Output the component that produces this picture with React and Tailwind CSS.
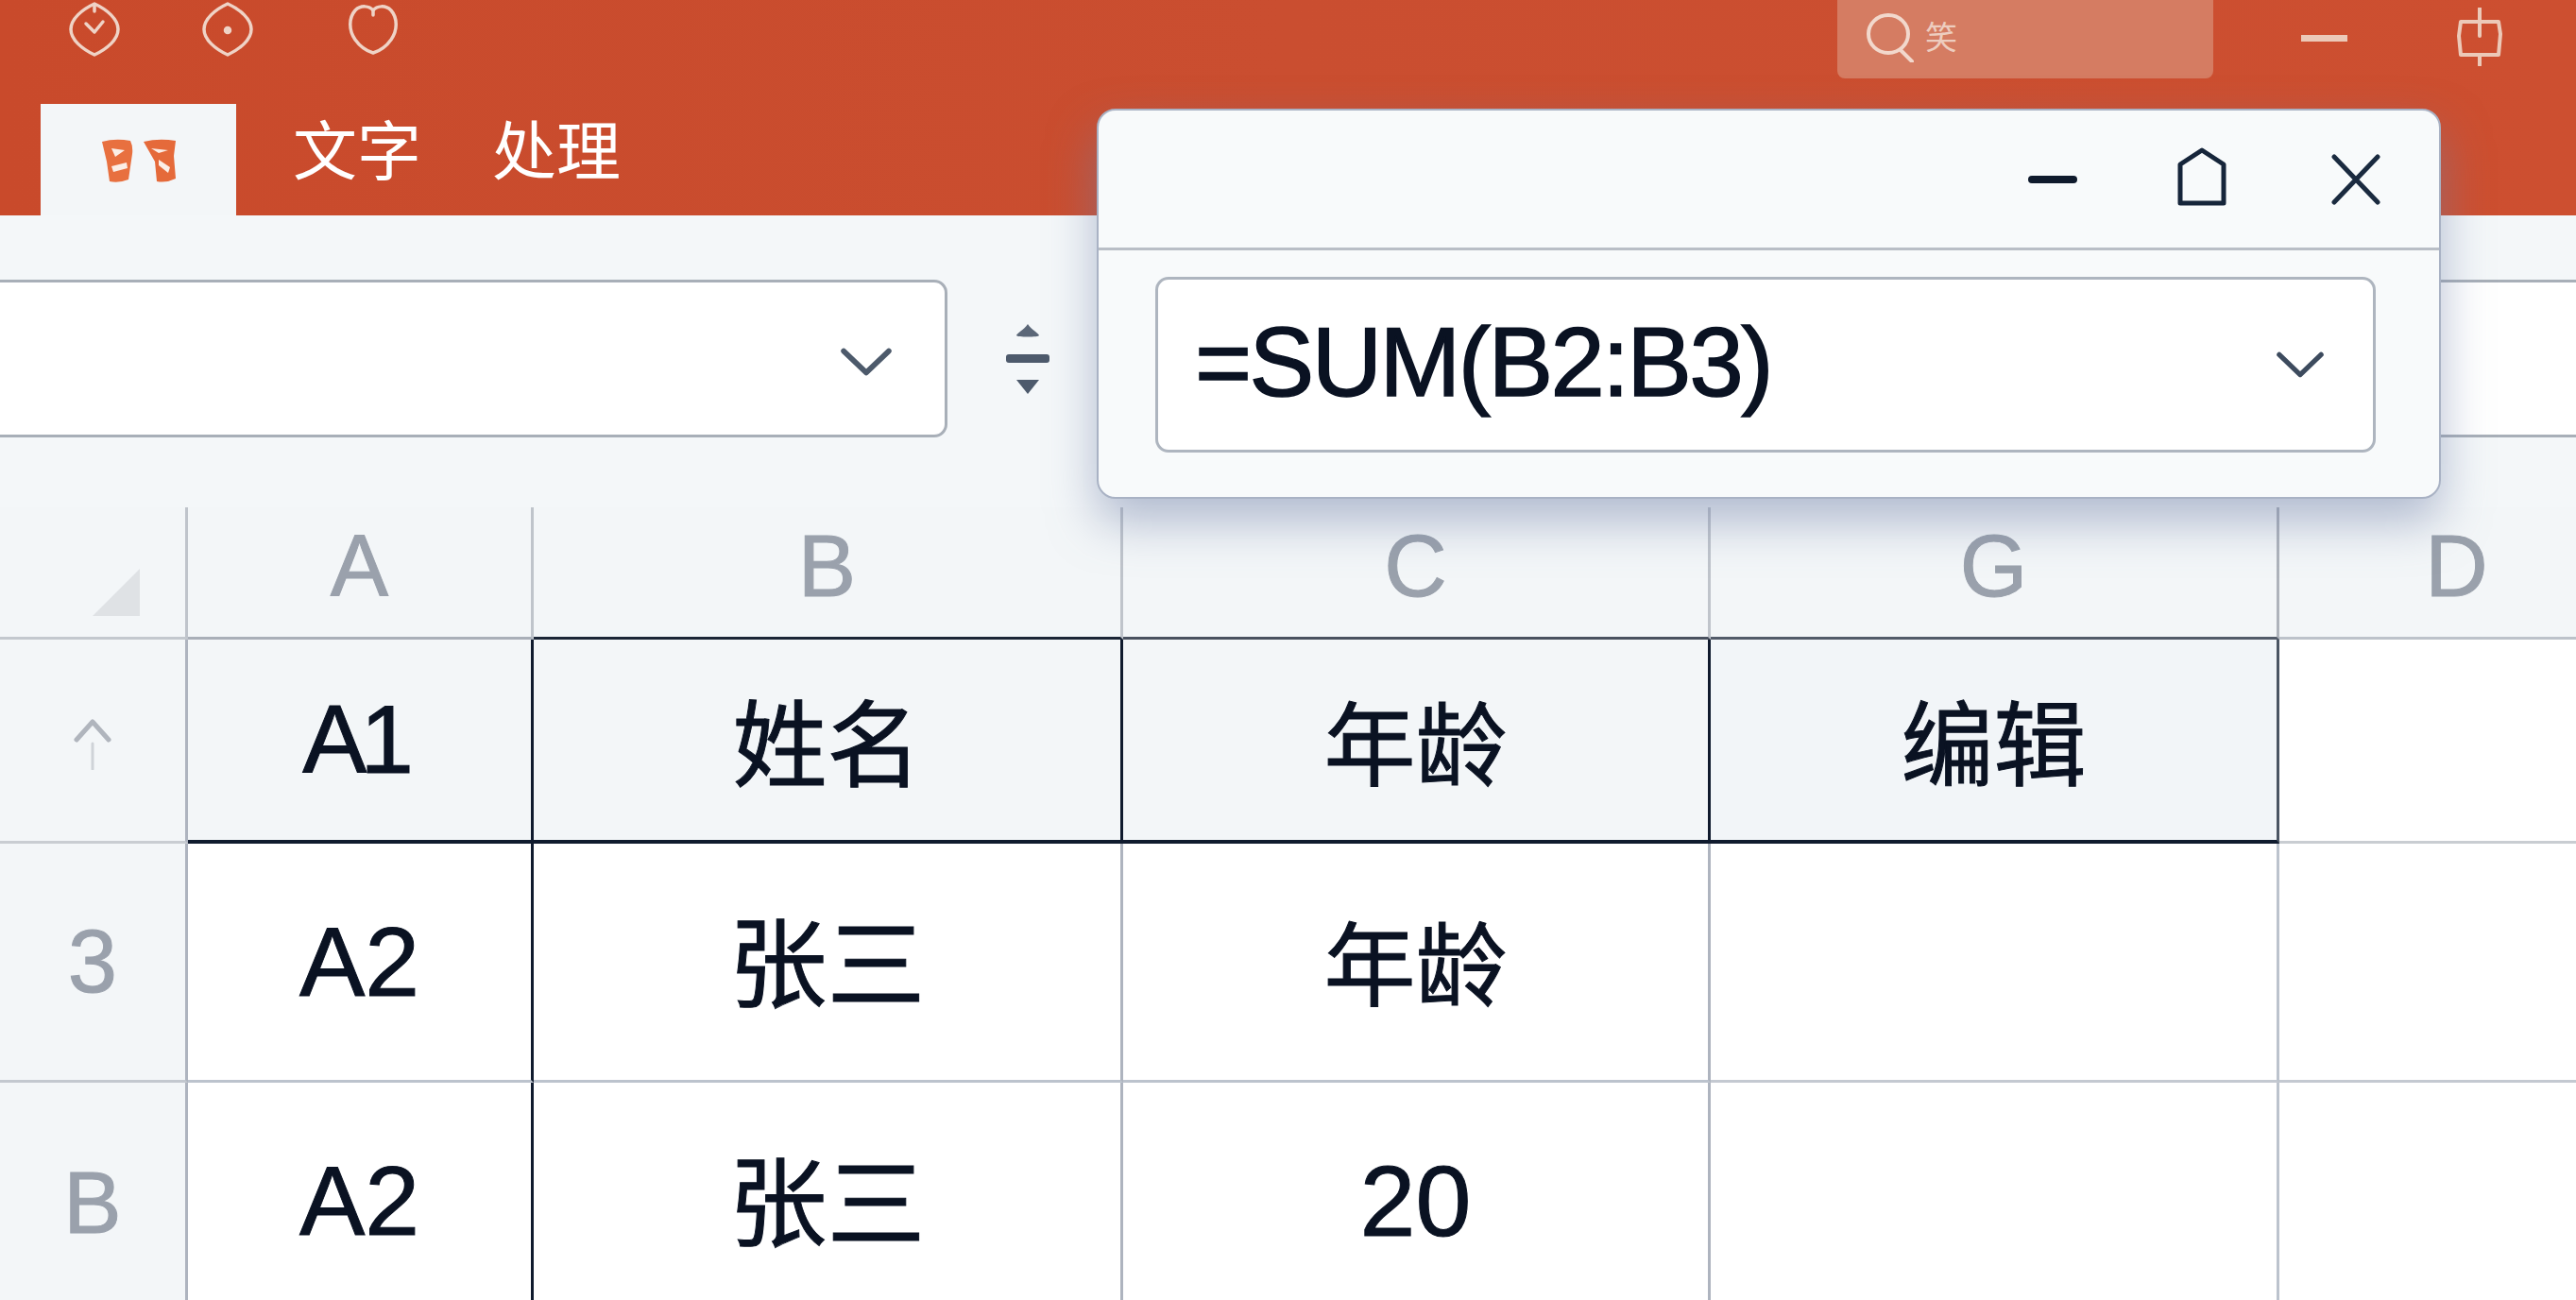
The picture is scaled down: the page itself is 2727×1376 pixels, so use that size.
const strokeLight = "#efd3c6";

// lens shaped icons of the title bar
const LensIcon = ({ children }) => (
  <svg width="54" height="58" viewBox="0 0 54 58" fill="none" stroke={strokeLight} strokeWidth="3.5" strokeLinecap="round" strokeLinejoin="round">
    <path d="M27 2C40 8 52 18 52 29C52 40 40 50 27 56C14 50 2 40 2 29C2 18 14 8 27 2Z" />
    {children}
  </svg>
);

const Chevron = ({ width, height, color }) => (
  <svg width={width} height={height} viewBox="0 0 52 28" fill="none" stroke={color} strokeWidth="5.5" strokeLinecap="round" strokeLinejoin="round">
    <path d="M3 3L26 25L49 3" />
  </svg>
);

const TabLogo = () => (
  <svg width="78" height="46" viewBox="0 0 78 46">
    <path d="M0 3Q14 -1 30 2Q33 8 32 16L28 43Q18 47 8 45L5 24Z" fill="#e8703f" />
    <path d="M10 10L24 12L14 19ZM10 29L26 25L27 31L12 35Z" fill="#fbeee6" />
    <path d="M44 3Q60 -1 78 2L76 18L78 42Q68 47 58 45L56 24Z" fill="#e56a3a" />
    <path d="M52 10L70 12L60 15ZM60 22L72 30L70 36L60 28Z" fill="#fbeee6" />
  </svg>
);

const TitleBar = () => (
  <div className="flex h-[110px] items-start pl-[73px]">
    <div className="mt-[2px]">
      <LensIcon>
        <path d="M18 23L27 32L36 21" strokeWidth="3.5" />
        <path d="M27 3V10" />
      </LensIcon>
    </div>
    <div className="mt-[2px] ml-[87px]">
      <LensIcon>
        <circle cx="27" cy="30" r="2.5" fill={strokeLight} />
      </LensIcon>
    </div>
    <div className="mt-1 ml-[100px]">
      <svg width="54" height="54" viewBox="0 0 54 54" fill="none" stroke={strokeLight} strokeWidth="3.5" strokeLinecap="round" strokeLinejoin="round">
        <path d="M27 7C23 2 14 1 8 7C1 15 1 28 8 38C13 45 20 50 27 52C34 50 41 45 46 38C53 28 53 15 46 7C40 1 31 2 27 7Z" />
        <path d="M27 7V12" />
      </svg>
    </div>
    <div className="ml-auto flex h-[83px] w-[398px] items-center rounded-b-lg bg-[#d57c62] pb-1 pl-[31px]">
      <svg width="50" height="52" viewBox="0 0 50 52" fill="none" stroke="#f2d8cc" strokeWidth="4" strokeLinecap="round">
        <ellipse cx="23" cy="22" rx="21" ry="20" />
        <path d="M36 39L48 51" />
      </svg>
      <span className="ml-3 text-[34px] leading-none text-[#edcdbf]">笑</span>
    </div>
    <div className="mt-[37px] ml-[93px] h-[7px] w-[49px] bg-[#ecc9b8]" />
    <svg className="mt-2 mr-[77px] ml-[115px]" width="50" height="62" viewBox="0 0 50 62" fill="none" stroke="#ecc9b8" strokeWidth="4" strokeLinecap="round" strokeLinejoin="round">
      <path d="M5 15H45L47 28L45 50H5L3 30Z" />
      <path d="M25 1V30M25 50V61" />
    </svg>
  </div>
);

const TabRow = () => (
  <div className="flex h-[118px] items-start pl-[43px]">
    <div className="flex h-[118px] w-[207px] items-start justify-center bg-[#f3f6f8] pt-[37px]">
      <TabLogo />
    </div>
    <div className="mt-[17px] ml-[60px] text-[68px] leading-[68px] text-white">文字</div>
    <div className="mt-[17px] ml-[75px] text-[68px] leading-[68px] text-white">处理</div>
  </div>
);

const Toolbar = () => (
  <div className="flex h-[309px] items-center bg-[#f4f7f9] pt-[68px] pb-[74px]">
    <div className="-ml-4 flex h-[167px] w-[1019px] shrink-0 items-center justify-end rounded-[14px] border-[3px] border-[#a8afb8] bg-white pt-[6px] pr-[56px]">
      <Chevron width={54} height={30} color="#4d5a6b" />
    </div>
    <svg className="ml-[62px] shrink-0" width="46" height="76" viewBox="0 0 46 76">
      <path d="M23 1C27 7 35 11 35 13C35 15 11 15 11 13C11 11 19 7 23 1Z" fill="#5b6778" />
      <rect x="0" y="33" width="46" height="9" rx="3" fill="#4d5a6c" />
      <path d="M11 60H35L23 75Z" fill="#4d5a6c" />
    </svg>
    <div className="-mr-4 ml-[100px] h-[167px] flex-1 rounded-[14px] border-[3px] border-[#a8afb8] bg-white" />
  </div>
);

const headCols = [
  { label: "A", className: "border-r-[#bfc4cb] border-b-[#a9afb8]" },
  { label: "B", className: "border-r-[#bfc4cb] border-b-[#1b2536]" },
  { label: "C", className: "border-r-[#bfc4cb] border-b-[#49515f]" },
  { label: "G", className: "border-r-[#aeb3bb] border-b-[#525b69]" },
  { label: "D", className: "border-r-transparent border-b-[#bcc2ca]" },
];

const HeaderCell = ({ children, className }) => (
  <div className={`flex items-center justify-center border-r-[3px] border-b-[3px] ${className}`}>{children}</div>
);

const DataCell = ({ children, className }) => (
  <div className={`flex items-center justify-center border-r-[3px] border-b-[3px] leading-none text-[#0a1222] [-webkit-text-stroke:1px_#0a1222] ${className}`}>
    {children}
  </div>
);

const Sheet = () => (
  <div className="grid h-[839px] grid-cols-[199px_366px_624px_622px_602px_378px] grid-rows-[140px_216px_253px_253px] overflow-hidden bg-white">
    {/* column heads */}
    <div className="relative border-r-[3px] border-b-[3px] border-r-[#bfc4cb] border-b-[#c3c8ce] bg-[#f3f6f8]">
      <svg className="absolute top-[65px] left-[98px]" width="50" height="50" viewBox="0 0 50 50">
        <path d="M50 0V50H0Z" fill="#dfe2e5" />
      </svg>
    </div>
    {headCols.map((col) => (
      <HeaderCell key={col.label} className={`bg-[#f3f6f8] pb-[14px] text-[92px] leading-none text-[#9aa1ac] [-webkit-text-stroke:1px_#9aa1ac] ${col.className}`}>
        {col.label}
      </HeaderCell>
    ))}

    {/* row 1 */}
    <div className="flex items-center justify-center border-r-[3px] border-b-[3px] border-r-[#aeb4bf] border-b-[#c9cdd2] bg-[#f3f6f8] pt-2">
      <svg width="40" height="54" viewBox="0 0 40 54" fill="none" strokeLinecap="round" strokeLinejoin="round">
        <path d="M3 22L20 3L37 22" stroke="#b0b5bd" strokeWidth="5" />
        <path d="M20 26V53" stroke="#cfd3d8" strokeWidth="3" />
      </svg>
    </div>
    <DataCell className="border-r-[#101b2e] border-b-[4px] border-b-[#101b2e] bg-[#f3f6f8] pr-[10px] text-[102px] tracking-[-0.07em]">A1</DataCell>
    <DataCell className="border-r-[#101b2e] border-b-[4px] border-b-[#101b2e] bg-[#f3f6f8] pt-[13px] text-[100px]">姓名</DataCell>
    <DataCell className="border-r-[#101b2e] border-b-[4px] border-b-[#101b2e] bg-[#f3f6f8] pt-[14px] text-[97px]">年龄</DataCell>
    <DataCell className="border-r-[#4b5563] border-b-[4px] border-b-[#101b2e] bg-[#f2f5f8] pt-[13px] text-[98px]">编辑</DataCell>
    <DataCell className="border-r-transparent border-b-[#c9cdd2]" />

    {/* row 2 */}
    <div className="flex items-center justify-center border-r-[3px] border-b-[3px] border-r-[#aeb4bf] border-b-[#c3c8cf] bg-[#f3f6f8] text-[94px] leading-none text-[#9aa1ac] [-webkit-text-stroke:1px_#9aa1ac]">3</div>
    <DataCell className="border-r-[#101b2e] border-b-[#bcc3cd] text-[104px]">A2</DataCell>
    <DataCell className="border-r-[#aeb4bf] border-b-[#bcc3cd] pt-[10px] text-[104px]">张三</DataCell>
    <DataCell className="border-r-[#aeb4bf] border-b-[#bcc3cd] pt-[10px] text-[97px]">年龄</DataCell>
    <DataCell className="border-r-[#bcc3cd] border-b-[#c4c9d1]" />
    <DataCell className="border-r-transparent border-b-[#c4c9d1]" />

    {/* row 3 */}
    <div className="flex items-center justify-center border-r-[3px] border-r-[#aeb4bf] bg-[#f3f6f8] text-[92px] leading-none text-[#9aa1ac] [-webkit-text-stroke:1px_#9aa1ac]">B</div>
    <DataCell className="border-r-[#101b2e] border-b-transparent text-[104px]">A2</DataCell>
    <DataCell className="border-r-[#aeb4bf] border-b-transparent pt-[10px] text-[104px]">张三</DataCell>
    <DataCell className="border-r-[#aeb4bf] border-b-transparent text-[106px]">20</DataCell>
    <DataCell className="border-r-[#bcc3cd] border-b-transparent" />
    <DataCell className="border-transparent" />
  </div>
);

const FormulaPopup = () => (
  <div className="absolute top-[115px] left-[1161px] flex h-[413px] w-[1423px] flex-col rounded-[20px] border-2 border-[#a9b2c4] bg-[#f8fafb] shadow-[0_24px_50px_rgba(112,128,168,0.5)]">
    <div className="flex h-[148px] items-center border-b-[3px] border-[#b9bec6] pt-[1px]">
      <div className="ml-[984px] h-2 w-[52px] rounded-sm bg-[#0f1a2c]" />
      <svg className="mb-[6px] ml-[106px]" width="52" height="62" viewBox="0 0 52 62" fill="none" stroke="#16253a" strokeWidth="5" strokeLinejoin="round">
        <path d="M26 3L49 18V59H3V18Z" />
      </svg>
      <svg className="ml-[111px]" width="52" height="54" viewBox="0 0 52 54" fill="none" stroke="#1a2a3f" strokeWidth="5" strokeLinecap="round">
        <path d="M3 3L49 51M49 3L3 51" />
      </svg>
    </div>
    <div className="mt-[28px] ml-[60px] flex h-[186px] w-[1292px] items-center justify-between rounded-[14px] border-[3px] border-[#aeb5bf] bg-white pr-[52px] pl-[39px]">
      <span className="mb-[6px] text-[103px] leading-none tracking-[-0.025em] text-[#0a1222] [-webkit-text-stroke:1.5px_#0a1222]">=SUM(B2:B3)</span>
      <Chevron width={50} height={28} color="#3d4b5e" />
    </div>
  </div>
);

export default function App() {
  return (
    <div className="relative h-[1376px] w-[2727px] overflow-hidden bg-white font-['Liberation_Sans','Noto_Sans_CJK_SC',sans-serif]">
      <div className="bg-gradient-to-r from-[#c94a2b] via-[#ca4e30] to-[#cd4f30]">
        <TitleBar />
        <TabRow />
      </div>
      <Toolbar />
      <Sheet />
      <FormulaPopup />
    </div>
  );
}
